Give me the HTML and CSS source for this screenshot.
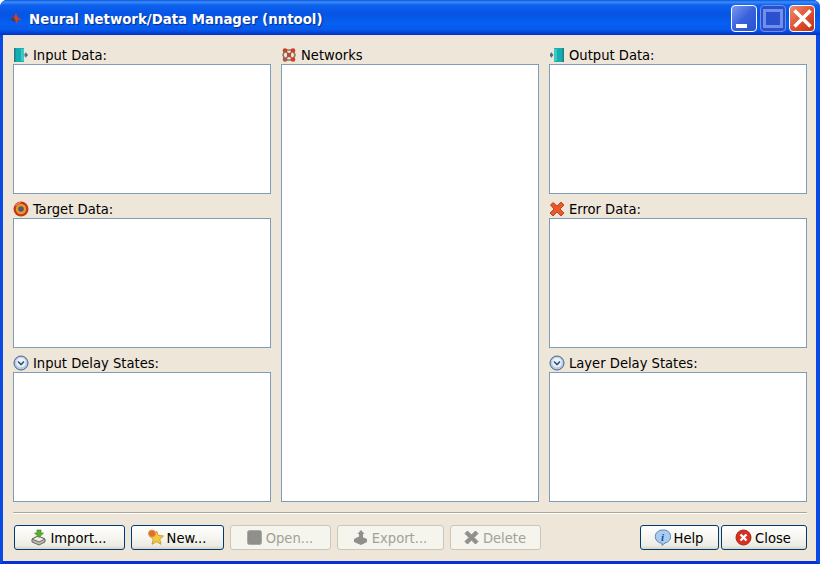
FILE: index.html
```html
<!DOCTYPE html>
<html lang="en">
<head>
<meta charset="utf-8">
<title>Neural Network/Data Manager (nntool)</title>
<link rel="stylesheet" href="styles.css">
</head>
<body>
<div class="window">
  <header class="titlebar">
    <svg class="app-icon" width="14" height="14" viewBox="0 0 14 14"><path d="M1 7l4-2 2-4 1.500 4 4.500 3-4-.5-1 4.500-2-4.500z" fill="#d8401c"/><path d="M1 7l4-2 1.500 4.500-2 .5z" fill="#4a3f55"/></svg>
    <h1 class="title">Neural Network/Data Manager (nntool)</h1>
    <div class="caption-buttons">
      <div class="cap cap-min"><span class="min-glyph"></span></div>
      <div class="cap cap-max"><span class="max-glyph"></span></div>
      <div class="cap cap-close"><svg width="27" height="27" viewBox="0 0 27 27"><path d="M5.500 5.500l16 16M21.500 5.500l-16 16" stroke="#fff" stroke-width="3.600" fill="none"/></svg></div>
    </div>
  </header>
  <main class="client">
    <div class="panes">
      <section class="column">
        <div class="pane">
          <div class="label"><svg class="ico" width="16" height="16" viewBox="0 0 16 16"><rect x="1" y="1" width="10" height="14" rx=".5" fill="#12aeb0"/><rect x="1" y="1" width="1.500" height="14" fill="#2a7a82"/><rect x="8" y="2" width="3" height="12" fill="#3cc8c4"/><path d="M11.500 6.500h1V5l2.500 3-2.500 3V9.500h-1z" fill="#4a6a84"/></svg><span>Input Data:</span></div>
          <div class="list"></div>
        </div>
        <div class="pane">
          <div class="label"><svg class="ico" width="16" height="16" viewBox="0 0 16 16"><circle cx="8" cy="8" r="7.500" fill="#c4381a"/><circle cx="8" cy="8" r="5.200" fill="#ee9a22"/><circle cx="8" cy="8" r="2.800" fill="#4a5a78"/><path d="M2.500 5a6.500 6.500 0 0 1 5-3.500" stroke="#f4b49c" fill="none"/></svg><span>Target Data:</span></div>
          <div class="list"></div>
        </div>
        <div class="pane">
          <div class="label"><svg class="ico" width="16" height="16" viewBox="0 0 16 16"><circle cx="8" cy="8" r="7" fill="#b4cce8" stroke="#4a6488"/><circle cx="8" cy="7.500" r="4.800" fill="#eaf2fa"/><path d="M5 6.500l3 3 3-3" stroke="#3a5070" stroke-width="1.600" fill="none"/></svg><span>Input Delay States:</span></div>
          <div class="list"></div>
        </div>
      </section>
      <section class="column">
        <div class="pane pane-fill">
          <div class="label"><svg class="ico" width="16" height="16" viewBox="0 0 16 16"><path d="M4 3h8l2 5-2 5H4L2 8zM4 3l8 10M12 3L4 13" stroke="#8a7a70" stroke-width="1.700" fill="none"/><circle cx="4" cy="3.500" r="2.300" fill="#c8401e"/><circle cx="12" cy="3.500" r="2.300" fill="#d83c1c"/><circle cx="8" cy="8" r="2.200" fill="#b84a2c"/><circle cx="4" cy="12.500" r="2.300" fill="#a85a44"/><circle cx="12" cy="12.500" r="2.300" fill="#d83c1c"/></svg><span>Networks</span></div>
          <div class="list list-fill"></div>
        </div>
      </section>
      <section class="column">
        <div class="pane">
          <div class="label"><svg class="ico" width="16" height="16" viewBox="0 0 16 16"><rect x="5" y="1" width="10" height="14" rx=".5" fill="#12aeb0"/><rect x="13.500" y="1" width="1.500" height="14" fill="#2a7a82"/><rect x="5" y="2" width="3" height="12" fill="#3cc8c4"/><path d="M1 6.500h1V5l2.500 3L2 11V9.500H1z" fill="#4a6a84"/></svg><span>Output Data:</span></div>
          <div class="list"></div>
        </div>
        <div class="pane">
          <div class="label"><svg class="ico" width="16" height="16" viewBox="0 0 16 16"><path d="M1.500 4L4 1.500 8 5 12 1 15 4 11 8l4 4-3 3-4-4-4 4-3-3 4-4z" fill="#e8582c" stroke="#c04820" stroke-linejoin="round"/></svg><span>Error Data:</span></div>
          <div class="list"></div>
        </div>
        <div class="pane">
          <div class="label"><svg class="ico" width="16" height="16" viewBox="0 0 16 16"><circle cx="8" cy="8" r="7" fill="#b4cce8" stroke="#4a6488"/><circle cx="8" cy="7.500" r="4.800" fill="#eaf2fa"/><path d="M5 6.500l3 3 3-3" stroke="#3a5070" stroke-width="1.600" fill="none"/></svg><span>Layer Delay States:</span></div>
          <div class="list"></div>
        </div>
      </section>
    </div>
    <hr class="separator">
    <footer class="actions">
      <button class="btn w-import"><svg class="ico" width="17" height="17" viewBox="0 0 17 17"><path d="M2 10l6-3 7 3v3l-6 3-7-3z" fill="#bdb9ac" stroke="#6a6a60"/><path d="M2 10l7 3 6-3-7-3z" fill="#efece2" stroke="#6a6a60"/><path d="M7 1h4v3h2.500L9 8.500 4.500 4H7z" fill="#58b030" stroke="#3a8020" stroke-width=".6"/></svg><span>Import...</span></button>
      <button class="btn w-new"><svg class="ico" width="17" height="17" viewBox="0 0 17 17"><path d="M9.500 2l2 4.500 5 .5-3.700 3.300 1.200 5-4.500-2.600L5 15.300l1.200-5L2.500 7l5-.5z" fill="#f4c840" stroke="#c09020" stroke-width=".8"/><circle cx="5" cy="4.500" r="3.500" fill="#e86838" stroke="#d8a040"/></svg><span>New...</span></button>
      <button class="btn w-open" disabled><svg class="ico" width="17" height="17" viewBox="0 0 17 17"><rect x="1.500" y="1.500" width="14" height="14" rx="2" fill="#8f8f8b" stroke="#a8a8a4"/></svg><span>Open...</span></button>
      <button class="btn w-export" disabled><svg class="ico" width="17" height="17" viewBox="0 0 17 17"><path d="M2 10l6-3 7 3v3l-6 3-7-3z" fill="#8f8f8b"/><path d="M9 1l3.500 4H11v4H7V5H5.500z" fill="#8f8f8b"/></svg><span>Export...</span></button>
      <button class="btn w-delete" disabled><svg class="ico" width="17" height="17" viewBox="0 0 17 17"><path d="M2 4.500L4.500 2 8.500 6 12.500 2 15 4.500 11 8.500l4 4L12.500 15 8.500 11l-4 4L2 12.500 6 8.500z" fill="#8f8f8b" stroke="#8f8f8b" stroke-linejoin="round"/></svg><span>Delete</span></button>
      <span class="spacer"></span>
      <button class="btn w-help"><svg class="ico" width="17" height="17" viewBox="0 0 17 17"><path d="M8.500 1a7 6.600 0 0 1 2.500 13l-3 2.500v-2.300A7 6.600 0 0 1 8.500 1z" fill="#a8cdf0" stroke="#5a88b8"/><text class="info-i" x="8.500" y="11.500" text-anchor="middle">i</text></svg><span>Help</span></button>
      <button class="btn w-close"><svg class="ico" width="17" height="17" viewBox="0 0 17 17"><circle cx="8.500" cy="8.500" r="7.500" fill="#d83020" stroke="#b02418"/><path d="M5.500 5.500l6 6M11.500 5.500l-6 6" stroke="#fff" stroke-width="2.400"/></svg><span>Close</span></button>
    </footer>
  </main>
</div>
</body>
</html>
```
FILE: styles.css
```css
html, body {
  margin: 0;
  padding: 0;
  width: 820px;
  height: 564px;
  overflow: hidden;
  background: #fff;
}
.window {
  width: 820px;
  height: 564px;
  display: flex;
  flex-direction: column;
  box-sizing: border-box;
  border-radius: 7px 7px 0 0;
  background: #0831d9;
  border-left: 3px solid #0a4ae4;
  border-right: 4px solid #0a4ae4;
  border-bottom: 3px solid #0831d9;
  font-family: "DejaVu Sans Condensed", "DejaVu Sans", sans-serif;
  font-size: 14.6px;
  color: #000;
}
.titlebar {
  height: 35px;
  flex: none;
  margin: 0 -4px 0 -3px;
  padding: 2px 5px 0 9px;
  display: flex;
  align-items: center;
  box-sizing: border-box;
  border-radius: 7px 7px 0 0;
  background: linear-gradient(180deg, #0a56e0 0, #3c8cf8 2px, #0e62ee 5px, #0654e4 14px, #0660f2 24px, #0658ea 30px, #0438cc 34px, #0330b8 35px);
}
.app-icon { flex: none; }
.title {
  margin: 0 0 0 6px;
  font-size: 14.8px;
  font-weight: 700;
  color: #fff;
  text-shadow: 1px 1px 1px #0a2a90;
  flex: 1;
  white-space: nowrap;
}
.caption-buttons {
  display: flex;
  gap: 3px;
  margin-top: -1px;
}
.cap {
  width: 26px;
  height: 27px;
  box-sizing: border-box;
  border: 1px solid #fff;
  border-radius: 4px;
  display: flex;
  overflow: hidden;
}
.cap-min { background: linear-gradient(135deg, #7a98f0, #3a62dc 50%, #2a50d0); }
.cap-max { background: #2a50d0; border-color: #6f8fe8; }
.cap-close { background: linear-gradient(135deg, #ee8c6c, #dc5030 55%, #c03010); }
.cap-close svg { margin: -1px; flex: none; }
.min-glyph {
  width: 11px;
  height: 4px;
  background: #fff;
  margin: 18px 0 0 4px;
}
.max-glyph {
  width: 20px;
  height: 19px;
  border: 3px solid #6f8fe8;
  box-sizing: border-box;
  margin: 3px 0 0 2px;
}
.client {
  flex: 1;
  min-height: 0;
  background: #efe6da;
  display: flex;
  flex-direction: column;
  padding: 11px 9px 11px 10px;
}
.panes {
  display: flex;
  gap: 10px;
  height: 456px;
  flex: none;
}
.column {
  width: 258px;
  display: flex;
  flex-direction: column;
  gap: 6px;
}
.pane {
  display: flex;
  flex-direction: column;
}
.pane-fill { flex: 1; }
.label {
  height: 18px;
  display: flex;
  align-items: center;
  gap: 4px;
  white-space: nowrap;
  line-height: 18px;
}
.ico { flex: none; }
.list {
  height: 130px;
  box-sizing: border-box;
  background: #fff;
  border: 1px solid #7f9db9;
}
.list-fill { flex: 1; height: auto; }
.separator {
  margin: 10px 0 0;
  height: 2px;
  border: 0;
  background: linear-gradient(180deg, #aca899 50%, #fff 50%);
  flex: none;
}
.actions {
  margin-top: 11px;
  padding-left: 1px;
  display: flex;
  gap: 6px;
}
.spacer { flex: 1; }
.btn {
  height: 25px;
  box-sizing: border-box;
  padding: 0 2px 0 0;
  border: 1px solid #003c74;
  border-radius: 3px;
  background: linear-gradient(180deg, #fff 0, #f6f5ef 50%, #ecebe4 85%, #d8d5c8 100%);
  font: inherit;
  color: #000;
  display: flex;
  align-items: center;
  justify-content: center;
  gap: 3px;
  flex: none;
}
.btn:disabled {
  background: #f5f4ed;
  border-color: #c9c7ba;
  color: #a3a197;
}
.w-import { width: 111px; }
.w-new { width: 93px; }
.w-open { width: 101px; }
.w-export { width: 107px; }
.w-delete { width: 91px; }
.w-help { width: 79px; }
.w-close { width: 86px; margin-left: -4px; }
.info-i {
  font-family: "Liberation Serif", serif;
  font-style: italic;
  font-weight: 700;
  font-size: 11px;
  fill: #1a4a90;
}
```
